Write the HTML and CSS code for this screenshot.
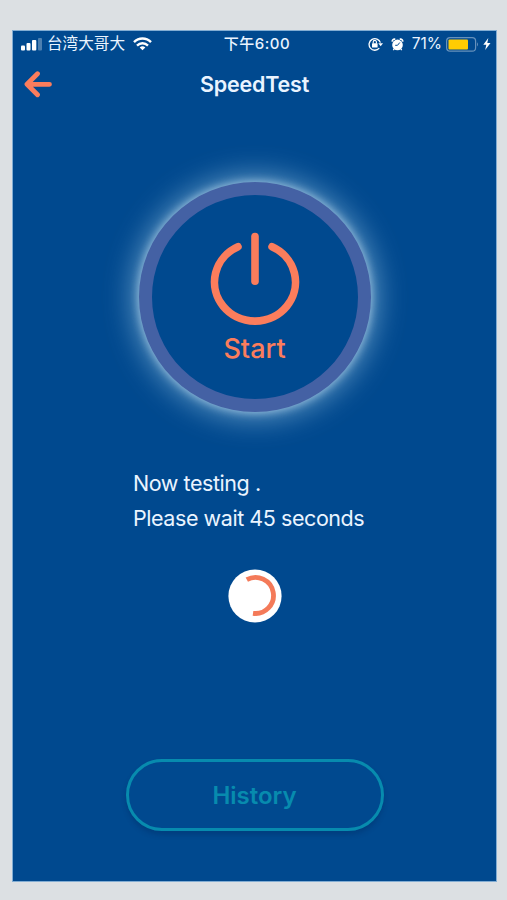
FILE: index.html
```html
<!DOCTYPE html>
<html lang="en">
<head>
<meta charset="utf-8">
<title>SpeedTest</title>
<link rel="stylesheet" href="styles.css">
</head>
<body>
<main class="screen">
  <div class="status">
    <div class="status-left">
      <svg class="signal" width="22" height="13" viewBox="0 0 22 13" fill="#fff">
        <rect x="0" y="7.5" width="4" height="5" rx="1"/>
        <rect x="5.5" y="5" width="4" height="7.5" rx="1"/>
        <rect x="11" y="2" width="4.3" height="10.5" rx="1"/>
        <rect x="17" y="0" width="4" height="12.5" rx="1" opacity=".3"/>
      </svg>
      <span class="carrier">台湾大哥大</span>
      <svg class="wifi" width="19" height="14" viewBox="0 0 19 14" fill="none" stroke="#fff" stroke-width="2.4">
        <path d="M1 5.2C5.8.3 13.2.3 18 5.2"/>
        <path d="M4 8.600C7.200 5.500 11.800 5.500 15 8.600"/>
        <path d="M9.500 13.200L6.700 10.400Q9.500 8.300 12.300 10.400Z" fill="#fff" stroke="none"/>
      </svg>
    </div>
    <span class="time">下午6:00</span>
    <div class="status-right">
      <svg class="lock" width="15" height="14" viewBox="0 0 15 14" fill="none" stroke="#fff">
        <path d="M11.300 11.200A5.800 5.800 0 1 1 12.400 5.600" stroke-width="1.300"/>
        <path d="M10.300 6.200h4.700l-2.300 3z" fill="#fff" stroke="none"/>
        <rect x="4" y="6.200" width="5.600" height="4.300" rx=".6" fill="#fff" stroke="none"/>
        <path d="M5.200 6.500V5a1.600 1.600 0 0 1 3.200 0v1.500" stroke-width="1.100"/>
      </svg>
      <svg class="alarm" width="13" height="13" viewBox="0 0 13 13">
        <path d="M1.300 3A2 2 0 0 1 3.600 1.200M11.700 3A2 2 0 0 0 9.400 1.200" fill="none" stroke="#fff" stroke-width="1.700" stroke-linecap="round"/>
        <circle cx="6.500" cy="6.900" r="5.300" fill="#fff"/>
        <path d="M3.200 11L2.300 12.200M9.800 11l.9 1.200" stroke="#fff" stroke-width="1.300"/>
        <path d="M8.800 4.500L6.500 7.300H4.200" fill="none" stroke="#00498f" stroke-width="1"/>
      </svg>
      <span class="percent">71%</span>
      <svg class="battery" width="33" height="15" viewBox="0 0 33 15">
        <rect x=".6" y=".6" width="29" height="13.600" rx="3.500" fill="none" stroke="#fff" stroke-opacity=".4" stroke-width="1.200"/>
        <rect x="2.500" y="2.500" width="19.500" height="10" rx="1" fill="#ffcc02"/>
        <path d="M31 5.200q1.900 2.200 0 4.400z" fill="#fff" opacity=".4"/>
      </svg>
      <svg class="bolt" width="8" height="12" viewBox="0 0 8 12"><path d="M5.300 0L.3 6.700h3L2.200 12l5.300-7H4.300z" fill="#fff"/></svg>
    </div>
  </div>
  <header class="bar">
    <svg class="back" width="30" height="28" viewBox="0 0 30 28" fill="none" stroke="#fb7d5c" stroke-width="4.800" stroke-linecap="round" stroke-linejoin="round">
      <path d="M14.500 3.800L4 14.300l10.500 10.500M4 14.300h22.500"/>
    </svg>
    <h1 class="title">SpeedTest</h1>
  </header>
  <button class="start">
    <svg class="power" width="90" height="94" viewBox="0 0 90 94" fill="none" stroke="#fb7d5c" stroke-width="7.600" stroke-linecap="round">
      <path d="M45 4.600V49.200"/>
      <path d="M28 14.700A40.500 39 0 1 0 62 14.700"/>
    </svg>
    <span class="start-label">Start</span>
  </button>
  <p class="message">Now testing .<br>Please wait 45 seconds</p>
  <svg class="spinner" width="54" height="54" viewBox="0 0 54 54">
    <circle cx="27" cy="27" r="26.600" fill="#fff"/>
    <path d="M18.800 10.700A18 18 0 1 1 25 44.300" fill="none" stroke="#f47a59" stroke-width="4.800"/>
  </svg>
  <button class="history">History</button>
</main>
</body>
</html>
```
FILE: styles.css
```css
* { box-sizing: border-box; }
body {
  margin: 0;
  height: 900px;
  padding: 30px 10px 18px 12px;
  background: #dce0e3;
  font-family: Inter, "Noto Sans CJK TC", sans-serif;
  color: #eaf4ff;
}
button { background: none; padding: 0; font-family: inherit; }
.screen {
  display: flex;
  flex-direction: column;
  align-items: center;
  width: 485px;
  height: 852px;
  background: #00498f;
  border: 1px solid #82add3;
}
.status {
  display: grid;
  grid-template-columns: 1fr auto 1fr;
  align-items: center;
  width: 100%;
  height: 26px;
  padding: 0 5px 0 8px;
  font-size: 15px;
  line-height: 20px;
}
.status-left, .status-right { display: flex; align-items: center; }
.status-right { justify-content: flex-end; }
.carrier { margin-left: 4px; font-size: 15.6px; }
.wifi { margin-left: 8px; }
.time { position: relative; left: 1px; font-weight: 500; letter-spacing: .5px; }
.alarm { margin-left: 8px; }
.percent { margin-left: 8px; font-size: 15.5px; }
.battery { margin-left: 4px; }
.bolt { margin-left: 4px; }
.bar {
  display: grid;
  grid-template-columns: 1fr auto 1fr;
  align-items: center;
  width: 100%;
  height: 54px;
  padding: 0 10px;
}
.title { margin: 0; font-size: 21.5px; font-weight: 600; line-height: 28px; letter-spacing: -.2px; }
.start {
  display: flex;
  flex-direction: column;
  align-items: center;
  width: 232px;
  height: 230px;
  margin-top: 71px;
  padding-top: 37px;
  border: 13px solid #4461a4;
  border-radius: 50%;
  background: #00498f;
  box-shadow: 0 0 8px 1px rgba(190, 220, 240, .65), 0 0 30px 5px rgba(150, 195, 225, .7);
  color: #fb7d5c;
}
.power { flex: none; }
.start-label { margin-top: 5px; font-size: 27px; font-weight: 500; line-height: 36px; }
.message {
  width: 243px;
  margin: 54px 0 0;
  font-size: 21.5px;
  line-height: 34.5px;
  letter-spacing: -.44px;
  white-space: nowrap;
}
.spinner { margin-top: 34px; flex: none; }
.history {
  width: 258px;
  height: 72px;
  margin-top: 136px;
  border: 3px solid #078bae;
  border-radius: 36px;
  box-shadow: 0 4px 5px rgba(0, 30, 80, .25);
  color: #078bae;
  font-size: 24px;
  font-weight: 600;
}
```
